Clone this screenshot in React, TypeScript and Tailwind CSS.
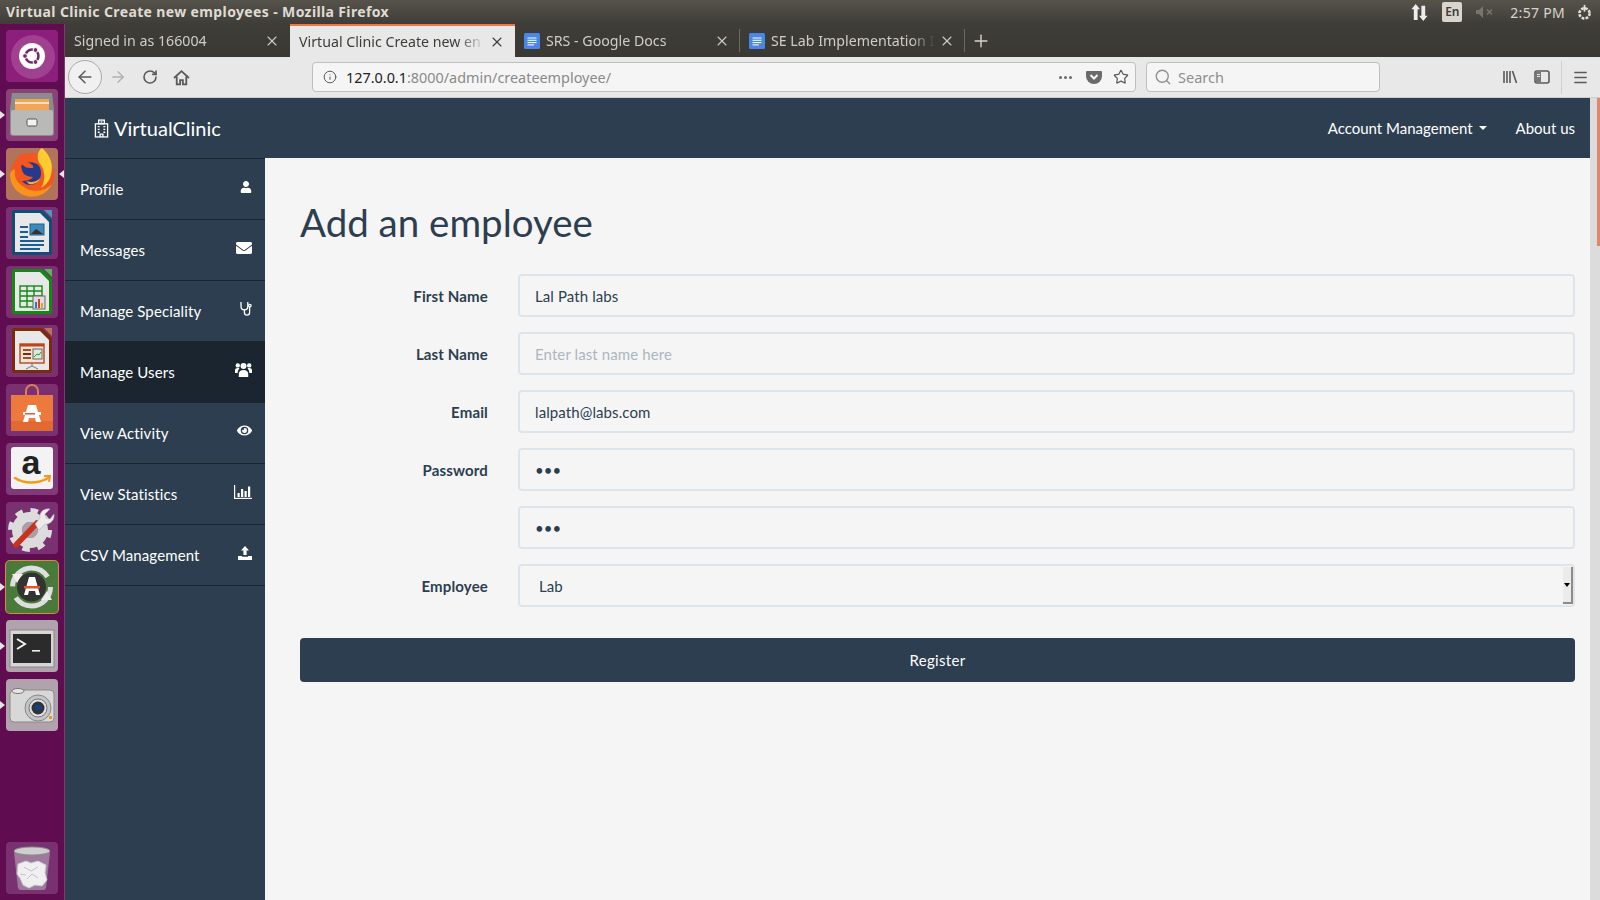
import React from 'react';
import { ArrowLeft, ArrowRight, RotateCw, Info, Star, Search, Menu, X, Plus } from 'lucide-react';
import { FaUser, FaEnvelope, FaEye } from 'react-icons/fa';

const CHROME = { fontFamily: '"Noto Sans", "Open Sans", sans-serif' };

const Tile: React.FC<{ bg: string; children?: React.ReactNode; extra?: string }> = ({ bg, children, extra = '' }) => (
  <div className={`w-[52px] h-[52px] rounded-[4px] shrink-0 flex items-center justify-center overflow-hidden ${bg} ${extra}`}>
    <svg viewBox="0 0 52 52" className="w-[52px] h-[52px]">{children}</svg>
  </div>
);

// launcher drawings
const UbuntuIcon = () => (
  <>
    <circle cx="27" cy="27" r="22" fill="#b56aa6" opacity="0.45" />
    <circle cx="26" cy="26" r="13" fill="#fff" />
    <circle cx="26" cy="26" r="6.5" fill="none" stroke="#772a6b" strokeWidth="2.6" />
    <circle cx="19" cy="26" r="2.4" fill="#772a6b" stroke="#fff" />
    <circle cx="29.5" cy="20" r="2.4" fill="#772a6b" stroke="#fff" />
    <circle cx="29.5" cy="32" r="2.4" fill="#772a6b" stroke="#fff" />
  </>
);
const FilesIcon = () => (
  <>
    <path d="M6 4h40l2 16v24a3 3 0 0 1-3 3H7a3 3 0 0 1-3-3V20z" fill="#8c8c8c" />
    <rect x="9" y="10" width="34" height="12" fill="#f1a55b" />
    <rect x="9" y="13" width="34" height="2" fill="#fbe2bd" />
    <rect x="5" y="21" width="42" height="25" rx="2" fill="#b9b9b7" />
    <rect x="21" y="30" width="10" height="7" rx="1.5" fill="#f2f2f2" stroke="#555" />
  </>
);
const FirefoxIcon = () => (
  <>
    <circle cx="26" cy="27" r="22" fill="#f2571f" />
    <path d="M4 27a22 22 0 0 0 42 9c-8 8-20 9-28 3C10 34 8 29 9 21 6 22 4 24 4 27z" fill="#f8931e" />
    <path d="M36 0c8 7 13 17 8 30-2 5-6 8-9 10 5-8 4-18-1-24-2-3-3-6-2-10 1-3 2-5 4-6z" fill="#ffcb2f" />
    <path d="M15 18c5-5 14-5 18 0 4 6 2 15-4 18-5 2-10 1-13-3 4 0 9-1 11-4-3 0-7-1-9-3-2-2-2-5-3-8z" fill="#27398c" />
    <path d="M12 8c6-4 13-3 17 2-5-1-7 1-8 4 4 2 7 3 6 6-4 0-7 0-9-2-4-3-8-6-6-10z" fill="#f2571f" />
    <path d="M20 33c5 2 11 1 14-3-1 5-7 7-11 6z" fill="#ffb028" />
  </>
);
const DocBase: React.FC<{ edge: string; corner: string; children?: React.ReactNode }> = ({ edge, corner, children }) => (
  <>
    <path d="M6 3h30l10 10v33a2 2 0 0 1-2 2H8a2 2 0 0 1-2-2V5a2 2 0 0 1 2-2z" fill={edge} />
    <path d="M9 6h25l9 9v30H9z" fill="#e8e8e8" />
    <path d="M38 3h8v8z" fill={corner} />
    {children}
  </>
);
const WriterIcon = () => (
  <DocBase edge="#0e4f78" corner="#4e97bd">
    <rect x="14" y="19" width="8" height="2" fill="#1c5f8f" />
    <rect x="14" y="24" width="8" height="2" fill="#1c5f8f" />
    <rect x="14" y="29" width="8" height="2" fill="#1c5f8f" />
    <rect x="24" y="17" width="14" height="11" fill="#3f88b8" stroke="#1c5f8f" />
    <path d="M25 27l5-5 3 2 4 3z" fill="#333" />
    <rect x="14" y="33" width="24" height="2" fill="#1c5f8f" />
    <rect x="14" y="37" width="24" height="2" fill="#1c5f8f" />
    <rect x="14" y="41" width="20" height="2" fill="#1c5f8f" />
  </DocBase>
);
const CalcIcon = () => (
  <DocBase edge="#128a12" corner="#55b855">
    <g fill="none" stroke="#128a12" strokeWidth="1.4">
      <rect x="14" y="20" width="22" height="21" />
      <path d="M14 25h22M14 30h22M14 35h22M21 20v21M28 20v21" />
    </g>
    <rect x="27" y="30" width="12" height="13" fill="#ddd" stroke="#666" />
    <rect x="29" y="36" width="2" height="6" fill="#1c7fc0" />
    <rect x="32" y="33" width="2" height="9" fill="#d83b2b" />
    <rect x="35" y="37" width="2" height="5" fill="#efa020" />
  </DocBase>
);
const ImpressIcon = () => (
  <DocBase edge="#7d2a0a" corner="#b87550">
    <rect x="14" y="19" width="24" height="19" fill="#f0e3da" stroke="#b5481d" strokeWidth="1.4" />
    <rect x="14" y="19" width="24" height="2.5" fill="#b5481d" />
    <rect x="17" y="24" width="8" height="2" fill="#b5481d" />
    <rect x="17" y="28" width="8" height="2" fill="#7d2a0a" />
    <rect x="17" y="32" width="8" height="2" fill="#b5481d" />
    <rect x="27" y="24" width="9" height="10" fill="#dfe8d9" stroke="#666" />
    <path d="M28 32l3-3 2 1 2-3" fill="none" stroke="#2f9a2f" />
    <path d="M26 38v3M26 41l-6 3M26 41l6 3" stroke="#777" fill="none" />
  </DocBase>
);
const SoftwareIcon = () => (
  <>
    <path d="M20 12V7a6 6 0 0 1 12 0v5" fill="none" stroke="#d9805a" strokeWidth="2" />
    <path d="M5 11h42v36H5z" fill="#ed7a3c" />
    <path d="M5 37h42v10H5z" fill="#e06a30" />
    <path d="M22 21h8l5 17h-5l-1-4h-6l-1 4h-5z" fill="#fff" />
    <rect x="17" y="28" width="18" height="3" fill="#fff" />
    <rect x="19" y="29" width="10" height="1.5" fill="#e8532a" />
  </>
);
const AmazonIcon = () => (
  <>
    <rect x="5" y="4" width="42" height="42" rx="3" fill="#f3f3f3" />
    <text x="25" y="31" textAnchor="middle" fontFamily="Liberation Sans, sans-serif" fontWeight="700" fontSize="34" fill="#222">a</text>
    <path d="M9 35c9 6 23 6 33 0" fill="none" stroke="#f49a1b" strokeWidth="2.6" strokeLinecap="round" />
    <path d="M38 33l6 0-1 6" fill="none" stroke="#f49a1b" strokeWidth="2" />
  </>
);
const SettingsIcon = () => (
  <>
    <circle cx="24" cy="28" r="8" fill="#a99fa8" />
    <circle cx="24" cy="28" r="13" fill="none" stroke="#dcdcdc" strokeWidth="10" />
    <circle cx="24" cy="28" r="19.5" fill="none" stroke="#dcdcdc" strokeWidth="5" strokeDasharray="7.5 7.8" />
    <path d="M10 43l21-22" stroke="#c8321f" strokeWidth="5.5" strokeLinecap="round" />
    <path d="M29 22l5-6c-1-6 4-10 10-9l-5 5 1 4 4 1 4-5c1 6-4 11-9 10l-6 6z" fill="#ececec" stroke="#aaa" strokeWidth="0.5" />
  </>
);
const UpdaterIcon = () => (
  <>
    <circle cx="25.5" cy="26" r="19" fill="none" stroke="#dedede" strokeWidth="5" strokeDasharray="48 12" />
    <path d="M6 13l11 0-6 9z" fill="#eee" />
    <path d="M46 39l-11 0 6-9z" fill="#eee" />
    <circle cx="25.5" cy="26" r="14.5" fill="#333" />
    <path d="M23 16h6l5 18h-4l-1-4h-6l-1 4h-4z" fill="#fff" />
    <rect x="18" y="25" width="16" height="2.5" fill="#e8532a" />
  </>
);
const TerminalIcon = () => (
  <>
    <rect x="4" y="10" width="44" height="37" fill="#d6d6d6" stroke="#888" />
    <rect x="7" y="14" width="38" height="29" fill="#2b2b2b" />
    <path d="M11 19l8 5-8 5" fill="none" stroke="#eee" strokeWidth="2" />
    <rect x="26" y="30" width="8" height="1.6" fill="#eee" />
  </>
);
const CameraIcon = () => (
  <>
    <rect x="4" y="11" width="44" height="32" rx="4" fill="#d8d8d8" stroke="#8a8a8a" />
    <ellipse cx="12" cy="12" rx="6" ry="2.5" fill="#e6e6e6" stroke="#777" />
    <circle cx="32" cy="29" r="13" fill="#c4c4c4" stroke="#8a8a8a" />
    <circle cx="32" cy="29" r="9" fill="#e2e2e2" stroke="#777" />
    <circle cx="32" cy="29" r="6.5" fill="#333" />
    <rect x="28.5" y="26" width="7" height="5" rx="1" fill="#123f88" />
    <rect x="43" y="37" width="3" height="3" fill="#e79a1c" />
  </>
);
const TrashIcon = () => (
  <>
    <path d="M8 10l4 36a3 3 0 0 0 3 2h22a3 3 0 0 0 3-2l4-36z" fill="#a98ca8" opacity="0.8" />
    <ellipse cx="26" cy="9" rx="18" ry="4" fill="#cfcfcf" stroke="#8e8e8e" />
    <path d="M12 22l8-3 5 2 7-2 8 4-1 8 2 7-5 6-7-1-6 3-6-3-3-7-3-4z" fill="#efefef" stroke="#c9c9c9" />
    <path d="M18 25l7 4 7-4M21 37l5-5 6 4M14 32l6 1" stroke="#c4c4c4" fill="none" />
  </>
);

const LAUNCHER: { bg: string; icon: React.ReactNode; extra?: string; left?: boolean; right?: boolean }[] = [
  { bg: 'bg-[#8d1f7c]', icon: <UbuntuIcon /> },
  { bg: 'bg-[#8a4378]', icon: <FilesIcon />, left: true },
  { bg: 'bg-[#b0735c]', icon: <FirefoxIcon />, left: true, right: true },
  { bg: 'bg-[#7a3172]', icon: <WriterIcon /> },
  { bg: 'bg-[#7a3172]', icon: <CalcIcon /> },
  { bg: 'bg-[#7a3172]', icon: <ImpressIcon /> },
  { bg: 'bg-[#7a3172]', icon: <SoftwareIcon /> },
  { bg: 'bg-[#7f3a77]', icon: <AmazonIcon /> },
  { bg: 'bg-[#7a3172]', icon: <SettingsIcon /> },
  { bg: 'bg-[#4a7a3a]', icon: <UpdaterIcon />, extra: 'ring-1 ring-[#d98a4a]', left: true },
  { bg: 'bg-[#b0a3ad]', icon: <TerminalIcon />, left: true },
  { bg: 'bg-[#b0a3ad]', icon: <CameraIcon />, left: true },
];

const Launcher = () => (
  <div className="w-[65px] shrink-0 bg-[#5f0c51] border-r border-[#7d3a72] flex flex-col items-center py-[6px] gap-[7px]">
    {LAUNCHER.map((it, i) => (
      <div key={i} className="relative">
        <Tile bg={it.bg} extra={it.extra}>{it.icon}</Tile>
        {it.left && <span className="absolute left-[-6px] top-[22px] w-0 h-0 border-y-[4px] border-y-transparent border-l-[5px] border-l-[#e5e5e5]" />}
        {it.right && <span className="absolute right-[-6px] top-[22px] w-0 h-0 border-y-[4px] border-y-transparent border-r-[5px] border-r-[#e5e5e5]" />}
      </div>
    ))}
    <div className="mt-auto">
      <Tile bg="bg-[#7a3172]"><TrashIcon /></Tile>
    </div>
  </div>
);

const DocIcon = () => (
  <svg viewBox="0 0 16 16" className="w-4 h-4 shrink-0">
    <rect width="16" height="16" rx="1.5" fill="#4a86e8" />
    <path d="M3.5 5h9M3.5 7.3h9M3.5 9.6h9M3.5 11.9h6.5" stroke="#fff" strokeWidth="1" />
  </svg>
);

const Tab: React.FC<{ title: string; doc?: boolean; active?: boolean; sep?: boolean }> = ({ title, doc, active, sep }) => (
  <div className={`w-[225px] h-full shrink-0 flex items-center pl-[9px] pr-[10px] relative ${active ? 'bg-[#e8e8e8] text-[#3d3c38] border-t-2 border-[#e9794a]' : 'text-[#cfcdc6]'}`}>
    {doc && <span className="mr-[6px]"><DocIcon /></span>}
    <span className="flex-1 overflow-hidden whitespace-nowrap text-[14.2px] [mask-image:linear-gradient(to_right,black_85%,transparent)]">{title}</span>
    <X size={16} strokeWidth={1.6} className={`shrink-0 ml-1 ${active ? 'text-[#3d3c38]' : 'text-[#cfcdc6]'}`} />
    {sep && <span className="absolute right-0 top-[5px] bottom-[5px] w-px bg-[#6a6962]" />}
  </div>
);

const Toolbar = () => (
  <div className="h-[41px] shrink-0 bg-[#e8e8e8] border-b border-[#cfcfcf] flex items-center text-[#5a5a5a]">
    <div className="ml-[3px] w-[34px] h-[34px] rounded-full border border-[#a9a9a9] bg-[#f0f0f0] flex items-center justify-center">
      <ArrowLeft size={20} strokeWidth={1.8} />
    </div>
    <ArrowRight size={18} strokeWidth={1.7} className="ml-[7px] text-[#b0b0b0]" />
    <RotateCw size={16} strokeWidth={2.4} className="ml-[15px]" />
    <svg viewBox="0 0 16 16" className="ml-[15px] w-[17px] h-[17px]" fill="none" stroke="#5a5a5a" strokeWidth="1.7"><path d="M1 8.5L8 2l7 6.5" /><path d="M3.5 7v7.5h3.2v-4h2.6v4h3.2V7" /></svg>
    <div className="ml-[122px] w-[824px] h-[30px] rounded-[4px] border border-[#bfbfbb] bg-[#f5f5f5] flex items-center pl-[10px] pr-[6px] text-[14.4px]">
      <Info size={14} strokeWidth={1.7} />
      <span className="ml-[9px] flex-1 whitespace-nowrap text-[#8a8a8a] pt-[2px]"><span className="text-[#222]">127.0.0.1</span>:8000/admin/createemployee/</span>
      <span className="flex gap-[2px] mr-[14px]">
        <i className="w-[3px] h-[3px] rounded-full bg-[#6a6a6a]" />
        <i className="w-[3px] h-[3px] rounded-full bg-[#6a6a6a]" />
        <i className="w-[3px] h-[3px] rounded-full bg-[#6a6a6a]" />
      </span>
      <svg viewBox="0 0 16 16" className="w-[16px] h-[16px] mr-[11px]"><path d="M1 2h14a1 1 0 0 1 1 1v4a8 8 0 0 1-16 0V3a1 1 0 0 1 1-1z" fill="#6a6a6a" /><path d="M4.5 6L8 9.5 11.5 6" fill="none" stroke="#f5f5f5" strokeWidth="2" /></svg>
      <Star size={16} strokeWidth={1.8} />
    </div>
    <div className="ml-[10px] w-[234px] h-[30px] rounded-[4px] border border-[#bfbfbb] bg-[#f5f5f5] flex items-center pl-[7px] text-[14.5px] text-[#8f8f8f]">
      <Search size={18} strokeWidth={1.8} className="text-[#8f8f8f]" />
      <span className="ml-[6px] pt-[2px]">Search</span>
    </div>
    <svg viewBox="0 0 16 16" className="w-4 h-4 ml-[122px]"><path d="M2 2v12M5 2v12M8 2v12M10.5 2l4 12" stroke="#5a5a5a" strokeWidth="1.6" fill="none" /></svg>
    <svg viewBox="0 0 16 16" className="w-4 h-4 ml-[16px]"><rect x="1" y="2" width="14" height="12" rx="2" fill="none" stroke="#5a5a5a" strokeWidth="1.6" /><rect x="2" y="3" width="5" height="10" fill="#5a5a5a" opacity=".8" /><path d="M3 5.5h3M3 7.5h3" stroke="#e8e8e8" /></svg>
    <span className="ml-[11px] w-px h-[33px] bg-[#cfcfcf]" />
    <Menu size={17} strokeWidth={1.9} className="ml-[10px]" />
  </div>
);

const StatsIcon = () => (
  <svg viewBox="0 0 18 14" className="w-[18px] h-[14px]" fill="#fff">
    <rect x="0" y="0" width="1.2" height="14" />
    <rect x="0" y="12.8" width="18" height="1.2" />
    <rect x="3.5" y="8" width="2.2" height="4" />
    <rect x="7" y="4" width="2.2" height="8" />
    <rect x="10.5" y="6" width="2.2" height="6" />
    <rect x="14" y="1.5" width="2.2" height="10.5" />
  </svg>
);
const UploadIcon = () => (
  <svg viewBox="0 0 14 14" className="w-[14px] h-[14px]" fill="#fff">
    <path d="M7 0l4 4.5H8.6V9H5.4V4.5H3z" />
    <path d="M0 10h4v.8h6V10h4v4H0z" />
  </svg>
);
const StethIcon = () => (
  <svg viewBox="0 0 12 15" className="w-[12px] h-[15px]" fill="none" stroke="#fff" strokeWidth="1.3">
    <path d="M1 1v4.5a3.4 3.4 0 0 0 6.8 0V1" />
    <path d="M4.4 9v2.5a2.6 2.6 0 0 0 5.2 0V6" />
    <circle cx="9.8" cy="4.6" r="1.3" />
  </svg>
);
const GroupIcon = () => (
  <svg viewBox="0 0 17 15" className="w-[17px] h-[15px]" fill="#fff">
    <circle cx="8.5" cy="4" r="3" />
    <path d="M3.8 15v-3.2C3.8 9.5 5.8 8 8.5 8s4.7 1.5 4.7 3.8V15z" />
    <circle cx="2.8" cy="3.4" r="2.2" />
    <circle cx="14.2" cy="3.4" r="2.2" />
    <path d="M0 11V8.2C0 6.8 1.2 6 2.8 6c.6 0 1.2.1 1.7.4C3.2 7.5 2.7 9 2.7 11z" />
    <path d="M17 11V8.2C17 6.8 15.8 6 14.2 6c-.6 0-1.2.1-1.7.4 1.3 1.1 1.8 2.6 1.8 4.6z" />
  </svg>
);

const MENU: { label: string; icon: React.ReactNode; active?: boolean }[] = [
  { label: 'Profile', icon: <FaUser size={12} /> },
  { label: 'Messages', icon: <FaEnvelope size={16} /> },
  { label: 'Manage Speciality', icon: <StethIcon /> },
  { label: 'Manage Users', icon: <GroupIcon />, active: true },
  { label: 'View Activity', icon: <FaEye size={15} /> },
  { label: 'View Statistics', icon: <StatsIcon /> },
  { label: 'CSV Management', icon: <UploadIcon /> },
];

const Sidebar = () => (
  <div className="w-[200px] shrink-0 bg-[#2c3e50] border-t border-[#1a252f]">
    {MENU.map((m) => (
      <div key={m.label} className={`h-[61px] flex items-center justify-between pl-[15px] pr-[13px] border-b border-[#1a252f] ${m.active ? 'bg-[#1a252f]' : ''}`}>
        <span className="text-[15px] tracking-[0.12px] text-white">{m.label}</span>
        <span className="w-[18px] flex justify-end text-white mb-[5px]">{m.icon}</span>
      </div>
    ))}
  </div>
);

const inputCls = 'w-full h-[43px] rounded-[4px] border-2 border-[#dce4ec] bg-[#f5f5f5] px-[15px] text-[15px] tracking-[0.1px] text-[#2c3e50] placeholder:text-[#acb6c0] outline-none';

const Row: React.FC<{ label?: string; children: React.ReactNode }> = ({ label, children }) => (
  <div className="flex items-center gap-[30px]">
    <label className="w-[188px] shrink-0 text-right text-[15px] tracking-[0.15px] font-bold text-[#2c3e50] pt-[2px]">{label}</label>
    <div className="flex-1 relative">{children}</div>
  </div>
);

const Main = () => (
  <div className="flex-1 min-w-0 bg-[#f5f5f5] pl-[35px] pr-[15px] pt-[43px]">
    <h1 className="text-[38.5px] leading-[43px] font-normal text-[#2c3e50]">Add an employee</h1>
    <form className="mt-[30px] flex flex-col gap-[15px]">
      <Row label="First Name"><input className={inputCls} defaultValue="Lal Path labs" /></Row>
      <Row label="Last Name"><input className={inputCls} placeholder="Enter last name here" /></Row>
      <Row label="Email"><input className={inputCls} defaultValue="lalpath@labs.com" /></Row>
      <Row label="Password"><input type="password" className={inputCls} defaultValue="abc" /></Row>
      <Row><input type="password" className={inputCls} defaultValue="abc" /></Row>
      <Row label="Employee">
        <select className={`${inputCls} appearance-none pl-[19px] pt-[2px]`} defaultValue="Lab">
          <option>Lab</option>
        </select>
        <span className="absolute right-[2px] top-[3px] w-[10px] h-[37px] bg-[#ebebeb] border-r-2 border-b-2 border-[#8f8a84] flex items-center justify-center pointer-events-none">
          <i className="w-0 h-0 border-x-[3.5px] border-x-transparent border-t-[4px] border-t-black" />
        </span>
      </Row>
      <button type="button" className="mt-[16px] h-[44px] rounded-[4px] bg-[#2c3e50] text-white text-[15px] tracking-[0.3px]">Register</button>
    </form>
  </div>
);

export default function App() {
  return (
    <div className="h-screen w-full overflow-hidden flex flex-col bg-[#f5f5f5]" style={{ fontFamily: 'Lato, sans-serif' }}>
      {/* window title bar */}
      <div style={CHROME} className="h-[24px] shrink-0 bg-gradient-to-b from-[#56534b] to-[#3f3d38] flex items-center pl-[6px] pr-[7px] text-[#dfdbd2]">
        <span className="text-[14px] font-bold tracking-[0.37px] flex-1 whitespace-nowrap mb-[1px]">Virtual Clinic Create new employees - Mozilla Firefox</span>
        <svg viewBox="0 0 20 20" className="w-[19px] h-[19px]"><path d="M6 1l4.5 5.5H8V18H4V6.5H1.5zM14 19l-4.5-5.5H12V3h4v10.5h2.5z" fill="#eee" /></svg>
        <span className="ml-[13px] w-[20px] h-[20px] rounded-[2px] bg-[#d9d5cc] text-[#3c3b37] text-[12px] font-semibold flex items-center justify-center">En</span>
        <svg viewBox="0 0 20 14" className="ml-[13px] w-[20px] h-[14px]" fill="#77756d"><path d="M1 5h3l4-4v12L4 9H1z" /><path d="M12 4.5l5 5M17 4.5l-5 5" stroke="#77756d" strokeWidth="1.5" /></svg>
        <span className="ml-[15px] text-[14px] tracking-[0.3px] text-[#d8d4cb] whitespace-nowrap">2:57 PM</span>
        <svg viewBox="0 0 20 20" className="ml-[11px] w-[17px] h-[17px]"><circle cx="10" cy="11" r="6" fill="none" stroke="#e5e1d8" strokeWidth="3" strokeDasharray="3.2 1.5" /><rect x="9" y="1" width="2" height="8" fill="#e5e1d8" /></svg>
      </div>
      <div className="flex-1 min-h-0 flex">
        <Launcher />
        <div className="flex-1 min-w-0 flex flex-col">
          {/* tab strip */}
          <div style={CHROME} className="h-[33px] shrink-0 bg-gradient-to-b from-[#3f3d38] to-[#3a3833] flex">
            <Tab title="Signed in as 166004" />
            <Tab title="Virtual Clinic Create new en" active />
            <Tab title="SRS - Google Docs" doc sep />
            <Tab title="SE Lab Implementation I" doc sep />
            <Plus size={20} strokeWidth={1.7} className="text-[#d6d4cd] ml-[6px] self-center" />
          </div>
          <div style={CHROME}><Toolbar /></div>
          <div className="flex-1 min-h-0 flex">
            <div className="flex-1 min-w-0 flex flex-col">
              <div className="h-[60px] shrink-0 bg-[#2c3e50] flex items-center text-white pl-[29px] pr-[15px]">
                <svg viewBox="0 0 16 20" className="w-[15px] h-[19px]" fill="none" stroke="#fff" strokeWidth="1.4"><rect x="1.5" y="5" width="13" height="14" /><rect x="5" y="1" width="6" height="4" /><path d="M7 3h2" /><path d="M4 8h2M10 8h2M4 11h2M10 11h2M4 14h2M10 14h2M6.5 19v-3h3v3" /></svg>
                <span className="ml-[5px] text-[20px] mb-[1px]">VirtualClinic</span>
                <span className="ml-auto text-[15px]">Account Management</span>
                <i className="ml-[6px] w-0 h-0 border-x-[4px] border-x-transparent border-t-[4px] border-t-white" />
                <span className="ml-[29px] text-[15px]">About us</span>
              </div>
              <div className="flex-1 min-h-0 flex">
                <Sidebar />
                <Main />
              </div>
            </div>
            {/* page scrollbar */}
            <div className="w-[10px] shrink-0 bg-[#dcdcdc] flex justify-end">
              <div className="w-[3px] h-[148px] bg-[#e0866a]" />
            </div>
          </div>
        </div>
      </div>
    </div>
  );
}
